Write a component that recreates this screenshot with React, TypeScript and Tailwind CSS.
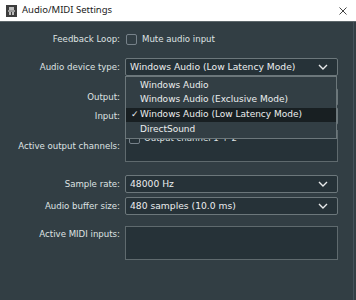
import React from "react";

function Chevron() {
  return (
    <svg width="10" height="6" viewBox="0 0 10 6" className="shrink-0">
      <path d="M1 1 L5 5 L9 1" fill="none" stroke="#e8eaeb" strokeWidth="1.4" />
    </svg>
  );
}

function Combo({ value, className = "" }: { value?: string; className?: string }) {
  return (
    <div
      className={`flex h-[18px] w-[213px] items-center justify-between rounded-[2px] border border-[#6c777b] bg-[#263238] pl-[4px] pr-[9px] text-[9.2px] text-[#eceeef] ${className}`}
    >
      <span className="whitespace-nowrap">{value}</span>
      <Chevron />
    </div>
  );
}

function Label({ text, className = "" }: { text: string; className?: string }) {
  return (
    <div className={`w-[120px] shrink-0 whitespace-nowrap text-right text-[8.6px] text-[#dfe2e3] ${className}`}>
      {text}
    </div>
  );
}

function CheckBox() {
  return <div className="h-[11px] w-[11px] shrink-0 rounded-[2px] border border-[#77828a]" />;
}

const options = [
  "Windows Audio",
  "Windows Audio (Exclusive Mode)",
  "Windows Audio (Low Latency Mode)",
  "DirectSound",
];

export default function App() {
  return (
    <div className="relative flex h-[300px] w-[356px] flex-col overflow-hidden bg-[#323e44] font-['DejaVu_Sans',sans-serif]">
      {/* title bar */}
      <div className="flex h-[21px] shrink-0 items-center bg-white pl-[6px] pr-[9px]">
        <svg width="11" height="12" viewBox="0 0 11 12">
          <rect x="0" y="0" width="11" height="12" fill="#3d3d3d" />
          <rect x="3" y="2" width="5" height="3" fill="#bdbdbd" />
          <rect x="2" y="5" width="7" height="2" fill="#9a9a9a" />
          <rect x="3" y="7" width="2" height="3" fill="#bdbdbd" />
          <rect x="6" y="7" width="2" height="3" fill="#bdbdbd" />
        </svg>
        <span className="ml-[5px] font-['Noto_Sans',sans-serif] text-[9.5px] text-[#1b1b1b]">Audio/MIDI Settings</span>
        <svg width="8" height="8" viewBox="0 0 8 8" className="ml-auto">
          <path d="M0.5 0.5 L7.5 7.5 M7.5 0.5 L0.5 7.5" stroke="#444" strokeWidth="1" />
        </svg>
      </div>
      <div className="h-px shrink-0 bg-[#5d676b]" />

      <div className="flex flex-1 flex-col">
        {/* feedback loop */}
        <div className="mt-[11px] flex h-[12px] items-center gap-[6px]">
          <Label text="Feedback Loop:" />
          <CheckBox />
          <span className="-ml-[1px] whitespace-nowrap text-[8.6px] text-[#dfe2e3]">Mute audio input</span>
        </div>

        {/* device type */}
        <div className="mt-[13px] flex items-center gap-[5px]">
          <Label text="Audio device type:" />
          <Combo value="Windows Audio (Low Latency Mode)" />
        </div>

        {/* output (hidden under the open list) */}
        <div className="mt-[12px] flex items-center gap-[5px]">
          <Label text="Output:" />
          <Combo />
        </div>

        {/* input */}
        <div className="mt-px flex items-center gap-[5px]">
          <Label text="Input:" />
          <Combo />
        </div>

        {/* active output channels */}
        <div className="mt-[5px] flex items-start gap-[5px]">
          <Label text="Active output channels:" className="pt-[10px]" />
          <div className="h-[32px] w-[213px] border border-[#5f6a6e] bg-[#263238] px-[3px] pt-[1px]">
            <div className="flex items-center gap-[4px] text-[8.6px] text-[#dfe2e3]">
              <CheckBox />
              <span>Output channel 1 + 2</span>
            </div>
          </div>
        </div>

        {/* sample rate */}
        <div className="mt-[13px] flex items-center gap-[5px]">
          <Label text="Sample rate:" />
          <Combo value="48000 Hz" />
        </div>

        {/* buffer size */}
        <div className="mt-[4px] flex items-center gap-[5px]">
          <Label text="Audio buffer size:" />
          <Combo value="480 samples (10.0 ms)" />
        </div>

        {/* midi inputs */}
        <div className="mt-[11px] flex items-start gap-[5px]">
          <Label text="Active MIDI inputs:" className="pt-[2px]" />
          <div className="h-[34px] w-[213px] border border-[#5f6a6e] bg-[#263238]" />
        </div>
      </div>

      <div className="absolute bottom-0 right-[2px] top-[22px] w-px bg-[#44525a]" />

      {/* open dropdown */}
      <div className="absolute left-[125px] top-[76px] flex h-[63px] w-[212px] flex-col border border-[#6c777b] bg-[#323e44] py-[1px] text-[9px] text-[#eceeef]">
        {options.map((o, i) => (
          <div
            key={o}
            className={`flex h-[15.5px] items-center whitespace-nowrap pl-[5px] ${i === 2 ? "bg-[#181f22]" : ""}`}
          >
            <span className="w-[9px] shrink-0">{i === 2 ? "✓" : ""}</span>
            <span>{o}</span>
          </div>
        ))}
      </div>
    </div>
  );
}
